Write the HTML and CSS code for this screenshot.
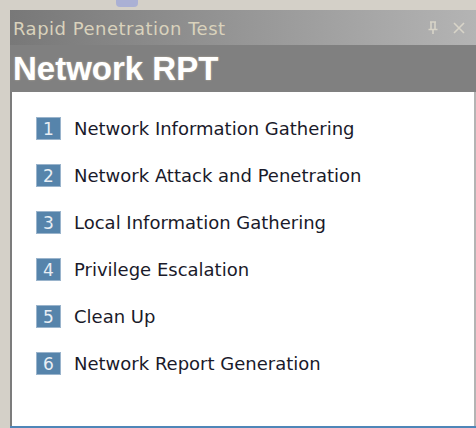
FILE: index.html
```html
<!DOCTYPE html>
<html>
<head>
<meta charset="utf-8">
<link rel="stylesheet" href="styles.css">
</head>
<body>
<div class="desk">
  <div class="strip"><span class="tab-hint"></span></div>
  <div class="pane">
    <div class="titlebar">
      <span class="title">Rapid Penetration Test</span>
      <span class="controls">
        <svg class="pin" width="12" height="14" viewBox="0 0 12 14">
          <path d="M3 1h6M4 1v7M8 1v7M1.5 8.5h9M6 9v4" stroke="#d8d4c8" stroke-width="1.6" fill="none"/>
        </svg>
        <svg class="close" width="14" height="14" viewBox="0 0 14 14">
          <path d="M2 2l10 10M12 2L2 12" stroke="#d8d4c8" stroke-width="1.6"/>
        </svg>
      </span>
    </div>
    <div class="header">Network RPT</div>
    <ul class="steps">
      <li><span class="num">1</span>Network Information Gathering</li>
      <li><span class="num">2</span>Network Attack and Penetration</li>
      <li><span class="num">3</span>Local Information Gathering</li>
      <li><span class="num">4</span>Privilege Escalation</li>
      <li><span class="num">5</span>Clean Up</li>
      <li><span class="num">6</span>Network Report Generation</li>
    </ul>
  </div>
</div>
</body>
</html>
```

FILE: styles.css
```css
html, body {
  margin: 0;
  padding: 0;
}

body {
  width: 476px;
  height: 428px;
  background: #d4d0c8;
  overflow: hidden;
  font-family: "DejaVu Sans", Verdana, sans-serif;
}

.desk {
  display: flex;
  flex-direction: column;
  height: 428px;
}

.strip {
  height: 10px;
  flex: none;
  position: relative;
}

.tab-hint {
  position: absolute;
  left: 116px;
  top: 0;
  width: 22px;
  height: 7px;
  background: #aab0d4;
  border-radius: 0 0 4px 4px;
}

.pane {
  flex: 1;
  margin-left: 10px;
  display: flex;
  flex-direction: column;
  border-bottom: 2px solid #4f86b8;
}

.titlebar {
  height: 35px;
  flex: none;
  display: flex;
  align-items: center;
  justify-content: space-between;
  padding: 0 10px 0 3px;
  background: linear-gradient(to right, #787878 0%, #8a8a8a 30%, #b4b4b4 100%);
}

.title {
  color: #d9d2bc;
  font-size: 18px;
  letter-spacing: 0.5px;
  padding-top: 2px;
}

.controls {
  display: flex;
  align-items: center;
  gap: 13px;
}

.header {
  height: 47px;
  flex: none;
  display: flex;
  align-items: center;
  padding-left: 3px;
  background: #808080;
  color: #ffffff;
  font-family: "Liberation Sans", Arial, sans-serif;
  font-weight: bold;
  font-size: 33px;
  text-shadow: 0 0 2px rgba(255, 240, 200, 0.5);
}

.steps {
  flex: 1;
  list-style: none;
  margin: 0;
  padding: 13px 0 0 24px;
  background: #ffffff;
  border-left: 2px solid #7c7c7c;
  border-right: 2px solid #b4b4b4;
}

.steps li {
  display: flex;
  align-items: center;
  height: 47px;
  font-size: 18px;
  color: #1a1a2a;
}

.num {
  width: 25px;
  height: 23px;
  box-sizing: border-box;
  margin-right: 13px;
  display: flex;
  align-items: center;
  justify-content: center;
  background: #5684ab;
  border: 1px solid #9ab4cc;
  color: #e8eef4;
  font-size: 17px;
}
```
